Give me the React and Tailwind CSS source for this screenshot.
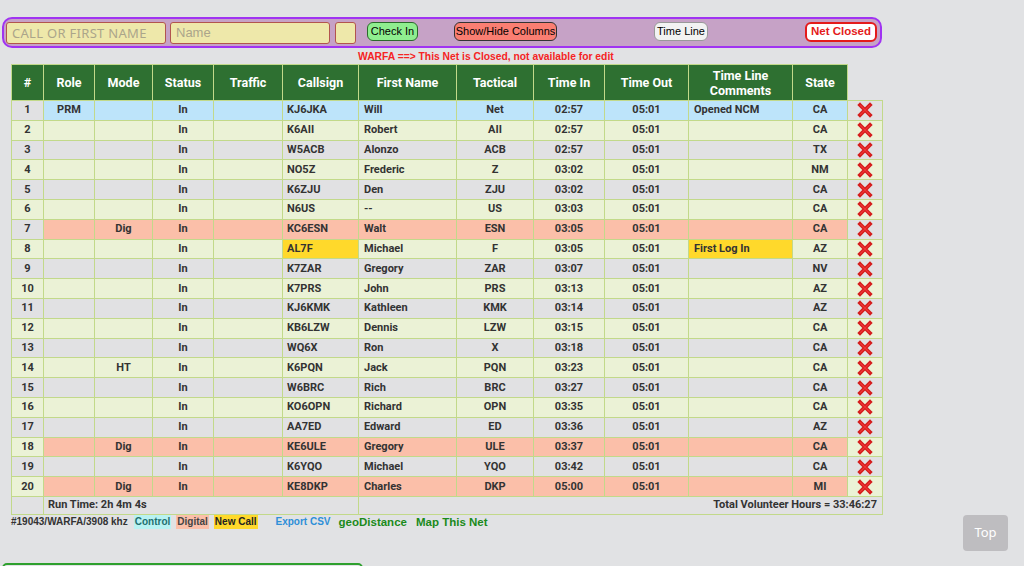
import React from 'react';

const rows = [
  { n: 1, role: 'PRM', mode: '', call: 'KJ6JKA', name: 'Will', tac: 'Net', tin: '02:57', tout: '05:01', cmt: 'Opened NCM', st: 'CA', kind: 'ctrl' },
  { n: 2, role: '', mode: '', call: 'K6AII', name: 'Robert', tac: 'AII', tin: '02:57', tout: '05:01', cmt: '', st: 'CA' },
  { n: 3, role: '', mode: '', call: 'W5ACB', name: 'Alonzo', tac: 'ACB', tin: '02:57', tout: '05:01', cmt: '', st: 'TX' },
  { n: 4, role: '', mode: '', call: 'NO5Z', name: 'Frederic', tac: 'Z', tin: '03:02', tout: '05:01', cmt: '', st: 'NM' },
  { n: 5, role: '', mode: '', call: 'K6ZJU', name: 'Den', tac: 'ZJU', tin: '03:02', tout: '05:01', cmt: '', st: 'CA' },
  { n: 6, role: '', mode: '', call: 'N6US', name: '--', tac: 'US', tin: '03:03', tout: '05:01', cmt: '', st: 'CA' },
  { n: 7, role: '', mode: 'Dig', call: 'KC6ESN', name: 'Walt', tac: 'ESN', tin: '03:05', tout: '05:01', cmt: '', st: 'CA', kind: 'dig' },
  { n: 8, role: '', mode: '', call: 'AL7F', name: 'Michael', tac: 'F', tin: '03:05', tout: '05:01', cmt: 'First Log In', st: 'AZ', kind: 'new' },
  { n: 9, role: '', mode: '', call: 'K7ZAR', name: 'Gregory', tac: 'ZAR', tin: '03:07', tout: '05:01', cmt: '', st: 'NV' },
  { n: 10, role: '', mode: '', call: 'K7PRS', name: 'John', tac: 'PRS', tin: '03:13', tout: '05:01', cmt: '', st: 'AZ' },
  { n: 11, role: '', mode: '', call: 'KJ6KMK', name: 'Kathleen', tac: 'KMK', tin: '03:14', tout: '05:01', cmt: '', st: 'AZ' },
  { n: 12, role: '', mode: '', call: 'KB6LZW', name: 'Dennis', tac: 'LZW', tin: '03:15', tout: '05:01', cmt: '', st: 'CA' },
  { n: 13, role: '', mode: '', call: 'WQ6X', name: 'Ron', tac: 'X', tin: '03:18', tout: '05:01', cmt: '', st: 'CA' },
  { n: 14, role: '', mode: 'HT', call: 'K6PQN', name: 'Jack', tac: 'PQN', tin: '03:23', tout: '05:01', cmt: '', st: 'CA' },
  { n: 15, role: '', mode: '', call: 'W6BRC', name: 'Rich', tac: 'BRC', tin: '03:27', tout: '05:01', cmt: '', st: 'CA' },
  { n: 16, role: '', mode: '', call: 'KO6OPN', name: 'Richard', tac: 'OPN', tin: '03:35', tout: '05:01', cmt: '', st: 'CA' },
  { n: 17, role: '', mode: '', call: 'AA7ED', name: 'Edward', tac: 'ED', tin: '03:36', tout: '05:01', cmt: '', st: 'AZ' },
  { n: 18, role: '', mode: 'Dig', call: 'KE6ULE', name: 'Gregory', tac: 'ULE', tin: '03:37', tout: '05:01', cmt: '', st: 'CA', kind: 'dig' },
  { n: 19, role: '', mode: '', call: 'K6YQO', name: 'Michael', tac: 'YQO', tin: '03:42', tout: '05:01', cmt: '', st: 'CA' },
  { n: 20, role: '', mode: 'Dig', call: 'KE8DKP', name: 'Charles', tac: 'DKP', tin: '05:00', tout: '05:01', cmt: '', st: 'MI', kind: 'dig' },
];

const RedX = () => (
  <svg width="16" height="16" viewBox="0 0 16 16" className="mx-auto block">
    <path d="M3 3 L13 13 M13 3 L3 13" stroke="#d41c1c" strokeWidth="3.8" strokeLinecap="square" />
    <path d="M3.5 3.5 L12.5 12.5 M12.5 3.5 L3.5 12.5" stroke="#ee3636" strokeWidth="1.2" strokeLinecap="square" />
  </svg>
);

const th = 'bg-[#2e7031] text-white font-bold text-[12.5px] leading-[15px] border border-[#c2d98a] text-center';
const td = 'border border-[#c2d98a] h-[19.8px] py-0 text-[11px] leading-[14px]';

const Row = ({ r }) => {
  const alt = r.n % 2 === 1 ? 'bg-[#e1e1e3]' : 'bg-[#ebf2d6]';
  const rowBg = r.kind === 'ctrl' ? 'bg-[#bde4fa]' : r.kind === 'dig' ? 'bg-[#fbbfa9]' : alt;
  const yel = r.kind === 'new' ? 'bg-[#ffd92b]' : rowBg;
  return (
    <tr>
      <td className={`${td} ${alt} text-center`}>{r.n}</td>
      <td className={`${td} ${rowBg} text-center`}>{r.role}</td>
      <td className={`${td} ${rowBg} text-center`}>{r.mode}</td>
      <td className={`${td} ${rowBg} text-center`}>In</td>
      <td className={`${td} ${rowBg}`}></td>
      <td className={`${td} ${yel} pl-[4px]`}>{r.call}</td>
      <td className={`${td} ${rowBg} pl-[5px]`}>{r.name}</td>
      <td className={`${td} ${rowBg} text-center`}>{r.tac}</td>
      <td className={`${td} ${rowBg} text-center`}>{r.tin}</td>
      <td className={`${td} ${rowBg} text-center`}>{r.tout}</td>
      <td className={`${td} ${yel} pl-[5px]`}>{r.cmt}</td>
      <td className={`${td} ${rowBg} text-center`}>{r.st}</td>
      <td className={`${td} ${alt}`}><RedX /></td>
    </tr>
  );
};

export default function App() {
  return (
    <div className="min-h-[566px] bg-[#e1e2e4] text-[#333] font-['Roboto',sans-serif] font-bold relative overflow-hidden">
      <div className="pt-[17px] pl-[2px]">
        <div className="w-[880px] h-[31px] rounded-[10px] border-2 border-[#a033f2] bg-[#c6a2c6] flex items-center pl-[2px] font-['Liberation_Sans',Arial,sans-serif] font-normal">
          <input
            placeholder="CALL OR FIRST NAME"
            className="w-[160px] h-[22px] bg-[#eee8aa] border border-[#b2554e] rounded-[3px] px-[5px] text-[13px] placeholder:text-[#aba58a] font-['Noto_Sans',sans-serif] tracking-[0.3px] outline-none"
          />
          <input
            placeholder="Name"
            className="ml-[4px] w-[160px] h-[22px] bg-[#eee8aa] border border-[#b2554e] rounded-[3px] px-[5px] text-[13px] placeholder:text-[#aba58a] outline-none"
          />
          <div className="ml-[5px] w-[21px] h-[22px] bg-[#eee8aa] border border-[#b2554e] rounded-[3px]" />
          <button className="ml-[11px] w-[51px] h-[19px] -mt-[2px] bg-[#8fee8f] border border-[#2a6a2a] rounded-[6px] text-[11px] text-black leading-none">Check In</button>
          <button className="ml-[36px] w-[103px] h-[19px] -mt-[2px] bg-[#fa7e72] border border-[#333] rounded-[6px] text-[11px] text-black leading-none">Show/Hide Columns</button>
          <button className="ml-[97px] w-[54px] h-[19px] -mt-[2px] bg-[#f2f2f2] border border-[#999] rounded-[6px] text-[11px] text-black leading-none">Time Line</button>
          <button className="ml-[97px] w-[72px] h-[20px] -mt-[2px] bg-white border-2 border-[#e41b1b] rounded-[6px] text-[11.5px] text-[#e41b1b] font-bold leading-none">Net Closed</button>
        </div>
      </div>
      <div className="pl-[358px] h-[16px] pt-[2px] text-[10.3px] leading-[13px] text-[#f52424] font-['Liberation_Sans',Arial,sans-serif]">
        WARFA ==&gt; This Net is Closed, not available for edit
      </div>
      <table className="ml-[11px] border-collapse table-fixed w-[871px]">
        <colgroup>
          <col className="w-[32px]" />
          <col className="w-[51px]" />
          <col className="w-[58px]" />
          <col className="w-[61px]" />
          <col className="w-[69px]" />
          <col className="w-[76px]" />
          <col className="w-[98px]" />
          <col className="w-[77px]" />
          <col className="w-[71px]" />
          <col className="w-[84px]" />
          <col className="w-[104px]" />
          <col className="w-[55px]" />
          <col className="w-[35px]" />
        </colgroup>
        <thead>
          <tr className="h-[36px]">
            <th className={th}>#</th>
            <th className={th}>Role</th>
            <th className={th}>Mode</th>
            <th className={th}>Status</th>
            <th className={th}>Traffic</th>
            <th className={th}>Callsign</th>
            <th className={th}>First Name</th>
            <th className={th}>Tactical</th>
            <th className={th}>Time In</th>
            <th className={th}>Time Out</th>
            <th className={th}>Time Line<br />Comments</th>
            <th className={th}>State</th>
            <th className="border-0"></th>
          </tr>
        </thead>
        <tbody>
          {rows.map((r) => (
            <Row key={r.n} r={r} />
          ))}
          <tr>
            <td className="border border-[#c2d98a] bg-[#e1e1e3] h-[18px] py-0"></td>
            <td colSpan={5} className="border border-[#c2d98a] bg-[#e1e1e3] h-[18px] py-0 text-[11px] leading-[14px] pl-[4px]">Run Time: 2h 4m 4s</td>
            <td colSpan={7} className="border border-[#c2d98a] bg-[#e1e1e3] h-[18px] py-0 text-[11px] leading-[14px] text-right pr-[5px]">Total Volunteer Hours = 33:46:27</td>
          </tr>
        </tbody>
      </table>
      <div className="pl-[11px] flex items-center text-[10px] leading-[14px] font-['Liberation_Sans',Arial,sans-serif]">
        <span>#19043/WARFA/3908 khz</span>
        <span className="ml-[6px] bg-[#b8f2f2] text-[#1d6f6f] px-[1px]">Control</span>
        <span className="ml-[5px] bg-[#fbbfa9] text-[#444] px-[1px]">Digital</span>
        <span className="ml-[5px] bg-[#ffd92b] text-[#222] px-[1px]">New Call</span>
        <span className="ml-[18px] text-[#2d8fd8]">Export CSV</span>
        <span className="ml-[8px] text-[#1b8a1b] text-[11.5px]">geoDistance</span>
        <span className="ml-[9px] text-[#1b8a1b] text-[11.5px]">Map This Net</span>
      </div>
      <div className="absolute left-[963px] top-[515px] w-[45px] h-[36px] rounded-[4px] bg-[#bebdc0] text-white text-[13px] font-normal flex items-center justify-center font-['Noto_Sans',sans-serif]">Top</div>
      <div className="absolute left-[2px] top-[563px] w-[361px] h-[10px] border-2 border-[#2ea02e] rounded-[5px]" />
    </div>
  );
}
